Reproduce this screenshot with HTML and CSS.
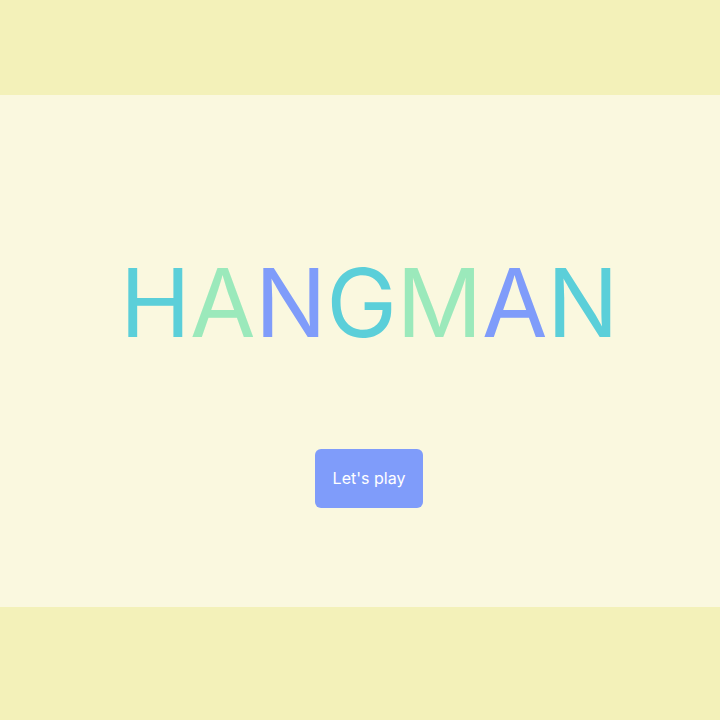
FILE: index.html
```html
<!DOCTYPE html>
<html>
<head>
<meta charset="utf-8">
<link rel="stylesheet" href="styles.css">
</head>
<body>
<div class="page">
  <header class="band"></header>
  <main class="stage">
    <h1 class="title"><span class="c1">H</span><span class="c2">A</span><span class="c3">N</span><span class="c1">G</span><span class="c2">M</span><span class="c3">A</span><span class="c1">N</span></h1>
    <button class="play">Let's play</button>
  </main>
  <footer class="band"></footer>
</div>
</body>
</html>
```
FILE: styles.css
```css
html, body { margin: 0; padding: 0; }
body { font-family: Inter, "Noto Sans", sans-serif; background: #f3f1b9; }
.page { display: flex; flex-direction: column; height: 720px; }
.band { height: 95px; background: #f3f1b9; flex: none; }
.band:last-child { height: 113px; }
.stage {
  flex: 1;
  background: #faf8df;
  display: flex;
  flex-direction: column;
  align-items: center;
  padding-top: 151px;
  padding-left: 18px;
  box-sizing: border-box;
}
.title {
  margin: 0;
  font-size: 95px;
  font-weight: 400;
  line-height: 1.21;
  letter-spacing: -0.5px;
}
.c1 { color: #5bcfd9; }
.c2 { color: #9be9bb; }
.c3 { color: #7f9cfa; }
.play {
  margin-top: 88px;
  width: 108px;
  height: 59px;
  border: none;
  border-radius: 6px;
  background: #7f9cfa;
  color: #fff;
  font-family: Inter, sans-serif;
  font-size: 16px;
  cursor: pointer;
}
```
